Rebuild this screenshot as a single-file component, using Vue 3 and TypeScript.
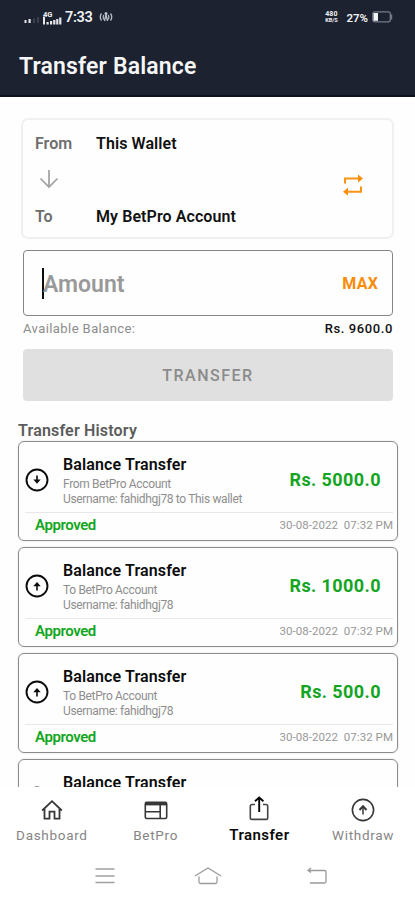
<script setup lang="ts">
interface HistoryEntry {
  direction: 'down' | 'up'
  route: string
  user: string
  amount: string
}

interface NavItem {
  id: string
  label: string
}

const date = '30-08-2022  07:32 PM'

const history: HistoryEntry[] = [
  { direction: 'down', route: 'From BetPro Account', user: 'Username: fahidhgj78 to This wallet', amount: 'Rs. 5000.0' },
  { direction: 'up', route: 'To BetPro Account', user: 'Username: fahidhgj78', amount: 'Rs. 1000.0' },
  { direction: 'up', route: 'To BetPro Account', user: 'Username: fahidhgj78', amount: 'Rs. 500.0' },
]

const navItems: NavItem[] = [
  { id: 'dashboard', label: 'Dashboard' },
  { id: 'betpro', label: 'BetPro' },
  { id: 'transfer', label: 'Transfer' },
  { id: 'withdraw', label: 'Withdraw' },
]
</script>

<template>
  <div class="screen">
    <header class="header">
      <div class="status">
        <div class="status-left">
          <svg class="signal-weak" viewBox="0 0 16 8" width="16" height="8">
            <path d="M0.500 4h2v3h-2zM4.500 3h2.200v4h-2.200z" fill="#e4e5e9" />
            <path d="M9 2.500h2v4.500h-2zM13 1h2v6h-2z" fill="#3b404f" />
          </svg>
          <div class="signal">
            <span class="signal-tag">4G</span>
            <svg viewBox="0 0 20 12" width="20" height="12">
              <path d="M1 3.500h2v8H1zM4.500 9h2.200v2.500H4.500zM8 8h2.200v3.500H8zM11.200 7h2.200v4.500h-2.200zM14.200 6h2.200v5.500h-2.200zM17.200 4.500h2.200v7h-2.200z" fill="#e4e5e9" />
            </svg>
          </div>
          <span class="clock">7:33</span>
          <svg class="cast" viewBox="0 0 14 12" width="14" height="12" fill="none" stroke="#b9bdc7" stroke-width="1.300">
            <path d="M2.500 2.500Q0 6 2.500 9.500M4.800 4Q3.500 6 4.800 8.500M11.500 2.500Q14 6 11.500 9.500M9.200 4Q10.500 6 9.200 8.500M7 3.500L5.500 10M7 3.500L8.500 10" />
            <circle cx="7" cy="2.500" r="1.500" fill="#b9bdc7" stroke="none" />
          </svg>
        </div>
        <div class="status-right">
          <div class="speed"><span>480</span><span>KB/S</span></div>
          <span class="percent">27%</span>
          <svg viewBox="0 0 21 12" width="21" height="12">
            <rect x="0.800" y="0.800" width="17.500" height="10" rx="2" fill="none" stroke="#747b87" stroke-width="1.300" />
            <path d="M19.500 3.500v5" stroke="#747b87" stroke-width="1.400" />
            <rect x="1.500" y="2" width="4.500" height="7.800" fill="#f3f4f6" />
          </svg>
        </div>
      </div>
      <h1 class="title">Transfer Balance</h1>
    </header>

    <main class="content">
      <section class="route-card">
        <div class="route-labels">
          <span>From</span>
          <svg class="down-arrow" viewBox="0 0 20 20" width="20" height="20" fill="none" stroke="#a0a0a0" stroke-width="1.700">
            <path d="M10 1v17M1.500 9.500L10 18l8.500-8.500" />
          </svg>
          <span>To</span>
        </div>
        <div class="route-values">
          <span class="from-value">This Wallet</span>
          <span class="to-value">My BetPro Account</span>
        </div>
        <svg class="swap" viewBox="0 0 22 22" width="22" height="22" fill="none" stroke="#fb9414" stroke-width="2">
          <path d="M3 9.500V4.500H16M19 12.500v5.300H6" />
          <path d="M16 0.500L21 4.500l-5 4zM6 13.800L1 17.800l5 4z" fill="#fb8c0c" stroke="none" />
        </svg>
      </section>

      <div class="amount-field">
        <i class="caret"></i>
        <span class="placeholder">Amount</span>
        <span class="max">MAX</span>
      </div>
      <div class="balance">
        <span class="balance-label">Available Balance:</span>
        <span class="balance-value">Rs. 9600.0</span>
      </div>
      <button class="submit" type="button">TRANSFER</button>

      <h2 class="history-title">Transfer History</h2>
      <div class="history">
        <article v-for="(entry, i) in history" :key="i" class="entry">
          <div class="entry-main">
            <svg class="entry-icon" viewBox="0 0 24 24" width="24" height="24" fill="none" stroke="#0b0b0b">
              <circle cx="12" cy="12" r="10.500" stroke-width="1.900" />
              <g v-if="entry.direction === 'down'">
                <path d="M12 7.500v6" stroke-width="1.600" />
                <path d="M8.300 11.600h7.400L12 15.800z" fill="#0b0b0b" stroke="none" />
              </g>
              <g v-else>
                <path d="M12 16.500v-6" stroke-width="1.600" />
                <path d="M8.300 12.200h7.400L12 8z" fill="#0b0b0b" stroke="none" />
              </g>
            </svg>
            <div class="entry-text">
              <span class="entry-name">Balance Transfer</span>
              <span class="entry-route">{{ entry.route }}</span>
              <span class="entry-user">{{ entry.user }}</span>
            </div>
            <span class="entry-amount">{{ entry.amount }}</span>
          </div>
          <div class="entry-foot">
            <span class="entry-state">Approved</span>
            <span class="entry-date">{{ date }}</span>
          </div>
        </article>
        <article class="entry">
          <div class="entry-main">
            <svg class="entry-icon" viewBox="0 0 24 24" width="24" height="24" fill="none" stroke="#0b0b0b">
              <circle cx="12" cy="12" r="10.500" stroke-width="1.900" />
            </svg>
            <div class="entry-text">
              <span class="entry-name">Balance Transfer</span>
            </div>
          </div>
        </article>
      </div>
    </main>

    <footer class="footer">
      <nav class="tabs">
        <a v-for="item in navItems" :key="item.id" class="tab" :class="{ active: item.id === 'transfer' }">
          <svg viewBox="0 0 26 28" width="26" height="28" fill="none" stroke="#373737" stroke-width="1.600">
            <path v-if="item.id === 'dashboard'" d="M3.200 15.500L13 6.200l9.800 9.300M5.500 13.500v10.200h5v-7h5v7h5V13.500" stroke-width="1.800" />
            <g v-else-if="item.id === 'betpro'">
              <rect x="2.300" y="7.300" width="21.400" height="16.200" rx="1.500" />
              <path d="M2.500 8.700h21" stroke-width="3.400" />
              <path d="M3 16.800h14M17.200 10v13" />
            </g>
            <g v-else-if="item.id === 'transfer'">
              <path d="M9 9.500H6q-1.700 0-1.700 1.700v11.500q0 1.700 1.700 1.700h14q1.700 0 1.700-1.700V11.200q0-1.700-1.700-1.700h-3" stroke="#444" />
              <path d="M13.200 17V4M9 6.200L13.200 2.500l4.200 3.700" stroke="#050505" stroke-width="1.900" />
            </g>
            <g v-else>
              <circle cx="13" cy="15" r="10.600" />
              <path d="M13 19.500v-7" stroke-width="1.500" />
              <path d="M9.500 15L13 11.300l3.500 3.700" stroke-width="2" />
            </g>
          </svg>
          <span class="tab-label">{{ item.label }}</span>
        </a>
      </nav>
      <div class="system">
        <svg viewBox="0 0 20 18" width="20" height="18" fill="none" stroke="#a0a0a0" stroke-width="1.400">
          <path d="M0.500 2h19M0.500 9h19M0.500 15.500h19" />
        </svg>
        <svg class="system-home" viewBox="0 0 28 18" width="28" height="18" fill="none" stroke="#9b9b9b" stroke-width="1.300">
          <path d="M1 9L14 1l13 8M5 9.500V15q0 1.500 1.500 1.500h15Q23 16.500 23 15V9.500" />
        </svg>
        <svg viewBox="0 0 22 18" width="22" height="18" fill="none" stroke="#9b9b9b" stroke-width="1.300">
          <path d="M5 1L2 3.500 5 5.500M2 3.500h16.500q1.500 0 1.500 1.500v9.500q0 1.500-1.500 1.500H4" />
        </svg>
      </div>
    </footer>
  </div>
</template>

<style>
body {
  background: #fefefe;
}
</style>

<style scoped>
* {
  box-sizing: border-box;
}

.screen {
  display: flex;
  flex-direction: column;
  width: 415px;
  height: 900px;
  overflow: hidden;
  background: #fefefe;
  font-family: Roboto, "Liberation Sans", sans-serif;
  color: #111;
  white-space: nowrap;
}

.header {
  flex: none;
  height: 97px;
  background: #1c2230;
  border-bottom: 2px solid #0d111c;
}

.status {
  display: flex;
  justify-content: space-between;
  height: 34px;
  padding: 0 22px 0 24px;
  color: #f0f1f3;
}

.status-left,
.status-right {
  display: flex;
  align-items: center;
}

.signal-weak {
  margin-top: 6px;
}

.signal {
  display: flex;
  flex-direction: column;
  width: 20px;
  height: 14px;
  margin: 2px 0 0 2px;
}

.signal-tag {
  height: 5px;
  padding-left: 1px;
  font-size: 7.500px;
  line-height: 7px;
  font-weight: 700;
}

.signal svg {
  margin-top: -3px;
}

.clock {
  margin-left: 3px;
  font-size: 14.500px;
  font-weight: 600;
  letter-spacing: -0.350px;
}

.cast {
  margin-left: 7px;
}

.speed {
  display: flex;
  flex-direction: column;
  align-items: center;
  width: 14px;
  font-size: 7px;
  line-height: 6.500px;
  font-weight: 700;
}

.speed span:last-child {
  font-size: 5.500px;
}

.percent {
  margin: 2px 4px 0 8px;
  font-size: 11.500px;
  font-weight: 600;
}

.title {
  margin: 19px 0 0 19px;
  font-size: 23px;
  line-height: 28px;
  font-weight: 600;
  letter-spacing: 0.150px;
  color: #f6f6f7;
}

.content {
  flex: 1;
  min-height: 0;
  overflow: hidden;
  padding: 21px 17px 0 18px;
}

.route-card {
  display: flex;
  height: 121px;
  margin: 0 4px 0 3px;
  padding: 15px 28px 0 12px;
  border: 2px solid #f0f0f0;
  border-radius: 7px;
  font-size: 16px;
  line-height: 18px;
  font-weight: 600;
}

.route-labels,
.route-values {
  display: flex;
  flex-direction: column;
}

.route-labels {
  width: 61px;
  color: #6e6e6e;
}

.down-arrow {
  margin: 16px 0 19px 4px;
}

.route-values {
  flex: 1;
  gap: 55px;
  letter-spacing: 0.080px;
}

.swap {
  margin-top: 39px;
}

.amount-field {
  display: flex;
  align-items: center;
  height: 66px;
  margin: 11px 5px 0;
  padding: 0 14px 0 18px;
  border: 1.500px solid #858585;
  border-radius: 4px;
}

.caret {
  width: 2px;
  height: 31px;
  background: #0c0c0c;
}

.placeholder {
  flex: 1;
  margin: 2px 0 0 -1px;
  font-size: 23px;
  font-weight: 600;
  color: #999;
}

.max {
  font-size: 16px;
  font-weight: 700;
  letter-spacing: 0.200px;
  color: #fa8c0a;
}

.balance {
  display: flex;
  justify-content: space-between;
  height: 33px;
  margin: 0 5px;
  padding-top: 4px;
  font-size: 13px;
  line-height: 17px;
}

.balance-label {
  letter-spacing: 0.420px;
  color: #8c8c8c;
}

.balance-value {
  font-weight: 500;
  letter-spacing: 0.600px;
}

.submit {
  display: block;
  width: 370px;
  height: 52px;
  margin: 0 5px;
  border: 0;
  border-radius: 4px;
  background: #e0e0e0;
  color: #8b8b8b;
  font-family: inherit;
  font-size: 16px;
  font-weight: 500;
  letter-spacing: 1.500px;
}

.history-title {
  margin: 20px 0 0;
  font-size: 16px;
  line-height: 20px;
  font-weight: 600;
  letter-spacing: 0.180px;
  color: #5c5c5c;
}

.history {
  display: flex;
  flex-direction: column;
  gap: 5.500px;
}

.entry {
  flex: none;
  width: 380px;
  height: 100.400px;
  border: 1.600px solid #8b8b8b;
  border-radius: 6px;
  box-shadow: 0 0 2px #ddd;
}

.entry-main {
  display: flex;
  height: 71px;
  margin: 0 4px 0 6px;
  padding-right: 12px;
  border-bottom: 1px solid #e8e8e8;
}

.entry-icon {
  margin-top: 26px;
}

.entry-text {
  display: flex;
  flex: 1;
  flex-direction: column;
  margin: 13px 0 0 14px;
  font-size: 12px;
  line-height: 15px;
  letter-spacing: -0.340px;
  color: #8e8e8e;
}

.entry-name {
  margin-bottom: 3px;
  font-size: 16px;
  line-height: 19px;
  font-weight: 600;
  letter-spacing: 0.130px;
  color: #0c0c0c;
}

.entry-amount {
  margin-top: 26px;
  font-size: 18px;
  line-height: 24px;
  font-weight: 700;
  letter-spacing: 0.420px;
  color: #13a522;
}

.entry-foot {
  display: flex;
  justify-content: space-between;
  padding: 3px 4px 0 16px;
  line-height: 19px;
}

.entry-state {
  font-size: 15px;
  font-weight: 600;
  letter-spacing: -0.420px;
  color: #12a620;
}

.entry-date {
  font-size: 11.500px;
  letter-spacing: 0.050px;
  color: #989898;
  white-space: pre;
}

.footer {
  flex: none;
  height: 113px;
  background: #fff;
}

.tabs {
  display: flex;
  height: 69px;
}

.tab {
  display: flex;
  flex: 1;
  flex-direction: column;
  align-items: center;
  padding-top: 8px;
}

.tab-label {
  margin-top: 3px;
  font-size: 13.500px;
  line-height: 18px;
  letter-spacing: 0.700px;
  color: #858585;
}

.active .tab-label {
  font-size: 15px;
  font-weight: 600;
  letter-spacing: 0.450px;
  color: #090909;
}

.system {
  display: flex;
  align-items: center;
  justify-content: space-between;
  height: 40px;
  padding: 0 87px 0 95px;
}

.system-home {
  margin-right: 5px;
}
</style>
